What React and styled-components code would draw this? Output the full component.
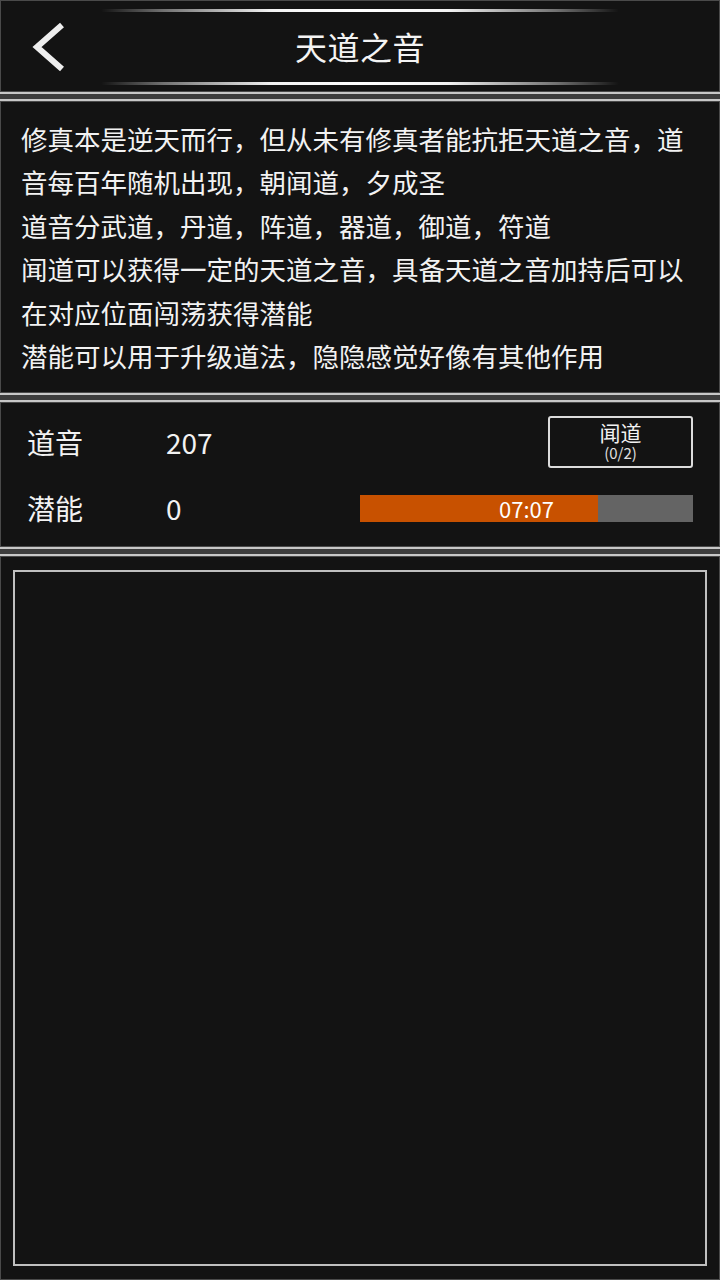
import React from "react";
import styled, { createGlobalStyle } from "styled-components";

const Global = createGlobalStyle`
  html, body { margin: 0; padding: 0; background: #131313; }
  body { font-family: "Noto Sans CJK SC", "Noto Sans", sans-serif; color: #f2f2f2; }
  #root { height: 1280px; }
`;

const Page = styled.div`
  width: 720px;
  height: 1280px;
  box-sizing: border-box;
  display: flex;
  flex-direction: column;
  background: #131313;
`;

const Panel = styled.section`
  box-sizing: border-box;
  background: #131313;
  border: 1px solid #4a4a4a;
  ${(p) => (p.$grow ? "flex: 1; min-height: 0;" : "")}
  height: ${(p) => (p.$h ? `${p.$h}px` : "auto")};
`;

const Separator = styled.div`
  height: 5px;
  background: #3d3d3d;
  border-top: 2px solid #c8c8c8;
  border-bottom: 2px solid #c8c8c8;
  flex: none;
`;

const Header = styled(Panel)`
  position: relative;
  display: flex;
  align-items: center;
  justify-content: center;
`;

const GlowLine = styled.div`
  position: absolute;
  left: 100px;
  right: 100px;
  height: 3px;
  top: ${(p) => p.$top}px;
  background: linear-gradient(
    90deg,
    rgba(255, 255, 255, 0) 0%,
    rgba(255, 255, 255, 0.4) 12%,
    rgba(255, 255, 255, 0.95) 33%,
    #ffffff 50%,
    rgba(255, 255, 255, 0.95) 67%,
    rgba(255, 255, 255, 0.4) 88%,
    rgba(255, 255, 255, 0) 100%
  );
  border-radius: 2px;
`;

const Back = styled.button`
  position: absolute;
  left: 28px;
  top: 20px;
  width: 40px;
  height: 52px;
  padding: 0;
  border: none;
  background: transparent;
  display: flex;
  align-items: center;
  justify-content: center;
`;

const Title = styled.h1`
  margin: 0;
  font-size: 32px;
  font-weight: 400;
  color: #f4f4f4;
  letter-spacing: 0.5px;
`;

const Intro = styled(Panel)`
  padding: 15px 28px 0 20px;
`;

const IntroText = styled.p`
  margin: 0;
  font-size: 26.5px;
  line-height: 43.4px;
  color: #f2f2f2;
`;

const Stats = styled(Panel)`
  display: flex;
  flex-direction: column;
  padding: 13px 26px 0 26px;
  gap: 14px;
`;

const Row = styled.div`
  display: flex;
  align-items: center;
  height: 52px;
`;

const Label = styled.span`
  width: 139px;
  font-size: 28px;
  color: #f2f2f2;
`;

const Value = styled.span`
  flex: 1;
  font-size: 28px;
  color: #f2f2f2;
`;

const ActionButton = styled.button`
  width: 145px;
  height: 52px;
  box-sizing: border-box;
  border: 2px solid #dcdcdc;
  border-radius: 3px;
  background: #131313;
  color: #f2f2f2;
  font-family: inherit;
  display: flex;
  flex-direction: column;
  align-items: center;
  justify-content: center;
  gap: 1px;
  padding: 0 0 2px 0;
`;

const ButtonMain = styled.span`
  display: block;
  font-size: 21px;
  line-height: 22px;
  height: 22px;
`;

const ButtonSub = styled.span`
  display: block;
  font-size: 15px;
  line-height: 17px;
  height: 17px;
  color: #e0e0e0;
`;

const Bar = styled.div`
  position: relative;
  width: 333px;
  height: 27px;
  background: #646464;
  display: flex;
  align-items: center;
  justify-content: center;
`;

const Fill = styled.div`
  position: absolute;
  left: 0;
  top: 0;
  bottom: 0;
  background: #c85100;
`;

const BarText = styled.span`
  position: relative;
  font-size: 22px;
  color: #ffffff;
`;

const Board = styled(Panel)`
  padding: 13px 12px 13px 12px;
  display: flex;
`;

const InnerBox = styled.div`
  flex: 1;
  border: 2px solid #c0c0c0;
  background: #131313;
`;

const lines = [
  "修真本是逆天而行，但从未有修真者能抗拒天道之音，道音每百年随机出现，朝闻道，夕成圣",
  "道音分武道，丹道，阵道，器道，御道，符道",
  "闻道可以获得一定的天道之音，具备天道之音加持后可以在对应位面闯荡获得潜能",
  "潜能可以用于升级道法，隐隐感觉好像有其他作用",
];

export default function App() {
  const progress = 0.715;
  return (
    <>
      <Global />
      <Page>
        <Header $h={92}>
          <GlowLine $top={8} />
          <Back aria-label="返回">
            <svg width="40" height="52" viewBox="0 0 40 52">
              <polyline
                points="33,4 8,26 33,48"
                fill="none"
                stroke="#eeeeee"
                strokeWidth="6"
                strokeLinecap="butt"
                strokeLinejoin="miter"
              />
            </svg>
          </Back>
          <Title>天道之音</Title>
          <GlowLine $top={81} />
        </Header>
        <Separator />
        <Intro $h={292}>
          {lines.map((l) => (
            <IntroText key={l}>{l}</IntroText>
          ))}
        </Intro>
        <Separator />
        <Stats $h={145}>
          <Row>
            <Label>道音</Label>
            <Value>207</Value>
            <ActionButton>
              <ButtonMain>闻道</ButtonMain>
              <ButtonSub>(0/2)</ButtonSub>
            </ActionButton>
          </Row>
          <Row>
            <Label>潜能</Label>
            <Value>0</Value>
            <Bar>
              <Fill style={{ width: `${progress * 100}%` }} />
              <BarText>07:07</BarText>
            </Bar>
          </Row>
        </Stats>
        <Separator />
        <Board $grow>
          <InnerBox />
        </Board>
      </Page>
    </>
  );
}
